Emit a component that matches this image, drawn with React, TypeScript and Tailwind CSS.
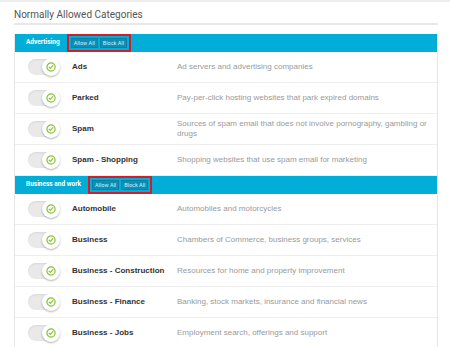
import React from "react";

type Category = { name: string; description: string };
type Section = { title: string; items: Category[] };

const sections: Section[] = [
  {
    title: "Advertising",
    items: [
      { name: "Ads", description: "Ad servers and advertising companies" },
      { name: "Parked", description: "Pay-per-click hosting websites that park expired domains" },
      {
        name: "Spam",
        description: "Sources of spam email that does not involve pornography, gambling or drugs",
      },
      { name: "Spam - Shopping", description: "Shopping websites that use spam email for marketing" },
    ],
  },
  {
    title: "Business and work",
    items: [
      { name: "Automobile", description: "Automobiles and motorcycles" },
      { name: "Business", description: "Chambers of Commerce, business groups, services" },
      { name: "Business - Construction", description: "Resources for home and property improvement" },
      { name: "Business - Finance", description: "Banking, stock markets, insurance and financial news" },
      { name: "Business - Jobs", description: "Employment search, offerings and support" },
    ],
  },
];

function Toggle() {
  return (
    <div className="relative w-[30px] h-[16px] rounded-full bg-[#e9e9e9] shadow-[inset_0_1px_2px_rgba(0,0,0,0.08)]">
      <div className="absolute right-[-2px] top-[-1px] w-[18px] h-[18px] rounded-full bg-white shadow-[0_1px_2px_rgba(0,0,0,0.3)] flex items-center justify-center">
        <svg width="10" height="10" viewBox="0 0 10 10" fill="none">
          <circle cx="5" cy="5" r="4.1" stroke="#86c232" strokeWidth="1.2" />
          <path d="M3.1 5.1 L4.4 6.3 L6.9 3.7" stroke="#86c232" strokeWidth="1.2" strokeLinecap="round" strokeLinejoin="round" />
        </svg>
      </div>
    </div>
  );
}

function SectionHeader({ title }: { title: string }) {
  return (
    <div className="h-[18px] bg-[#02aed8] flex items-center pl-[11px]">
      <span className="text-white text-[6.5px] font-bold font-['Roboto',sans-serif]">{title}</span>
      <div className="ml-[7px] h-[18px] border-2 border-[#cf1f2a] flex items-center gap-[2px] px-[2px]">
        <span className="h-[10px] px-[2px] flex items-center bg-[#0a8fb6] border border-[#0b7ea3] text-[#d5eef6] text-[5.5px] font-['Roboto',sans-serif]">
          Allow All
        </span>
        <span className="h-[10px] px-[2px] flex items-center bg-[#0a8fb6] border border-[#0b7ea3] text-[#d5eef6] text-[5.5px] font-['Roboto',sans-serif]">
          Block All
        </span>
      </div>
    </div>
  );
}

function Row({ item }: { item: Category }) {
  return (
    <div className="h-[31px] flex items-center border-b border-[#eeeeee] font-['Liberation_Sans',Arial,sans-serif]">
      <div className="w-[57px] pl-[13px] flex items-center">
        <Toggle />
      </div>
      <div className="w-[105px] text-[8px] font-bold text-[#333333]">{item.name}</div>
      <div className="w-[250px] text-[8px] leading-[10px] text-[#9a9a9a]">{item.description}</div>
    </div>
  );
}

export default function App() {
  return (
    <div className="w-[450px] h-[347px] overflow-hidden bg-white border-t-2 border-[#eeeeee]">
      <div className="pl-[14px] pr-[12px]">
        <div className="h-[21px] flex items-end pb-[3px]">
          <h2 className="text-[10px] leading-none text-[#555555] font-['Roboto',sans-serif]">
            Normally Allowed Categories
          </h2>
        </div>
        <div className="h-[2px] bg-[#e8e8e8]" />
        <div className="h-[9px]" />
        <div className="border-x border-[#e6e6e6]">
          {sections.map((section) => (
            <div key={section.title}>
              <SectionHeader title={section.title} />
              {section.items.map((item) => (
                <Row key={item.name} item={item} />
              ))}
            </div>
          ))}
        </div>
      </div>
    </div>
  );
}
